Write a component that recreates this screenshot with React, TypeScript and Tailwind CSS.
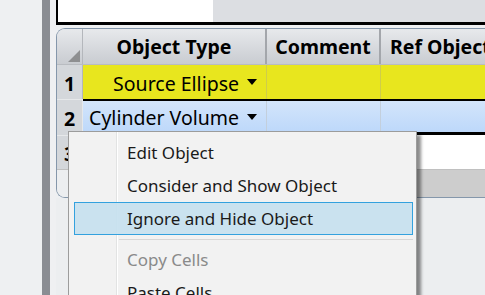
import React from "react";

function Arrow() {
  return (
    <svg width="10" height="6" viewBox="0 0 10 6" className="shrink-0">
      <polygon points="0,0 10,0 5,6" fill="#000" />
    </svg>
  );
}

export default function App() {
  return (
    <div className="relative w-[485px] h-[295px] overflow-hidden flex bg-[#eef0f2] font-[family-name:'Noto_Sans',sans-serif] text-[19.5px] text-black">
      <div className="w-[42px] shrink-0 bg-[#eef0f2]" />
      <div className="w-[8px] shrink-0 bg-[#8a8d93]" />
      <div className="w-[6px] shrink-0 bg-[#eff0f2]" />
      <div className="flex-1 flex flex-col min-w-0">
        {/* top box */}
        <div className="h-[25px] shrink-0 flex border-l-2 border-b-[3px] border-black">
          <div className="w-[155px] bg-white" />
          <div className="flex-1 bg-[#dcdee2]" />
        </div>
        <div className="h-[3px] shrink-0" />
        {/* grid */}
        <div className="h-[170px] shrink-0 flex flex-col border border-r-0 border-[#8597ab] rounded-tl-[9px] rounded-bl-[9px] overflow-hidden bg-[#eceef0]">
          {/* header */}
          <div className="h-[36px] shrink-0 flex border-b border-[#b9bcc1] bg-linear-to-b from-[#e7e9ec] to-[#c9ccd1] font-bold">
            <div className="w-[26px] shrink-0 border-r border-[#b4b7bc] flex items-end justify-end pr-[2px] pb-[2px]">
              <svg width="12" height="12" viewBox="0 0 12 12">
                <polygon points="12,0 12,12 0,12" fill="#8e8f91" />
              </svg>
            </div>
            <div className="w-[184px] shrink-0 border-r-2 border-[#a3a6ab] flex items-center justify-center whitespace-nowrap">Object Type</div>
            <div className="w-[114px] shrink-0 border-r-2 border-[#a3a6ab] flex items-center justify-center whitespace-nowrap">Comment</div>
            <div className="w-[118px] shrink-0 flex items-center justify-start pl-[9px] whitespace-nowrap">Ref Object</div>
          </div>
          {/* row 1 */}
          <div className="h-[34px] shrink-0 flex">
            <div className="w-[26px] shrink-0 border-r border-[#b4b7bc] bg-[#d4d7db] flex items-center justify-center font-bold pt-[3px]">1</div>
            <div className="w-[184px] shrink-0 border-r border-[#cfcd4a] bg-[#e8e61e] flex items-center justify-end gap-[8px] pr-[9px] whitespace-nowrap">
              <span className="pt-[3px]">Source Ellipse</span>
              <Arrow />
            </div>
            <div className="w-[114px] shrink-0 border-r border-[#cfcd4a] bg-[#e8e61e]" />
            <div className="flex-1 bg-[#e8e61e]" />
          </div>
          {/* row 2 */}
          <div className="h-[36px] shrink-0 flex">
            <div className="w-[26px] shrink-0 border-r border-[#b4b7bc] border-t border-[#e6e8ea] bg-[#d4d7db] flex items-center justify-center font-bold pt-[2px]">2</div>
            <div className="flex-1 flex border-t-2 border-b-[3px] border-black">
              <div className="w-[184px] shrink-0 border-r border-[#c3cfdc] bg-linear-to-b from-[#d3e5fb] to-[#bdd8fa] flex items-center justify-end gap-[8px] pr-[9px] whitespace-nowrap">
                <span className="pt-[2px]">Cylinder Volume</span>
                <Arrow />
              </div>
              <div className="w-[114px] shrink-0 border-r border-[#c3cfdc] bg-linear-to-b from-[#d3e5fb] to-[#bdd8fa]" />
              <div className="flex-1 bg-linear-to-b from-[#d3e5fb] to-[#bdd8fa]" />
            </div>
          </div>
          {/* row 3 */}
          <div className="h-[35px] shrink-0 flex border-b border-[#c0c0c0]">
            <div className="w-[26px] shrink-0 border-r border-[#b4b7bc] border-t border-[#e6e8ea] bg-[#d4d7db] flex items-center justify-center font-bold pt-[2px]">3</div>
            <div className="flex-1 bg-white" />
          </div>
          {/* scrollbar strip */}
          <div className="flex-1 flex">
            <div className="w-[26px] shrink-0 bg-[#eceef0]" />
            <div className="flex-1 bg-[#cdcdcd]" />
          </div>
        </div>
        <div className="flex-1 bg-[#eceef0]" />
      </div>

      {/* context menu */}
      <div className="absolute left-[68px] top-[131px] w-[349px] h-[200px] bg-[#f2f2f2] border border-[#9c9c9c] shadow-[4px_4px_3px_rgba(0,0,0,0.45)] pt-[4px] text-[17px]">
        <div className="absolute left-[47px] top-0 bottom-0 w-[2px] flex">
          <div className="w-px bg-[#e2e3e3]" />
          <div className="w-px bg-white" />
        </div>
        <div className="relative flex flex-col">
          <div className="h-[33px] ml-[5px] mr-[3px] flex items-center pl-[53px] text-[#1a1a1a]">Edit Object</div>
          <div className="h-[33px] ml-[5px] mr-[3px] flex items-center pl-[53px] text-[#1a1a1a]">Consider and Show Object</div>
          <div className="h-[33px] ml-[5px] mr-[3px] flex items-center pl-[52px] text-[#1a1a1a] bg-[#c5e0ee]/90 border border-[#33a1de]">Ignore and Hide Object</div>
          <div className="h-[8px] ml-[50px] mr-[3px] flex flex-col justify-center">
            <div className="h-px bg-[#d7d7d7]" />
          </div>
          <div className="h-[33px] ml-[5px] mr-[3px] flex items-center pl-[53px] text-[#8a8a8a]">Copy Cells</div>
          <div className="h-[33px] ml-[5px] mr-[3px] flex items-center pl-[53px] text-[#1a1a1a]">Paste Cells</div>
        </div>
      </div>
    </div>
  );
}
